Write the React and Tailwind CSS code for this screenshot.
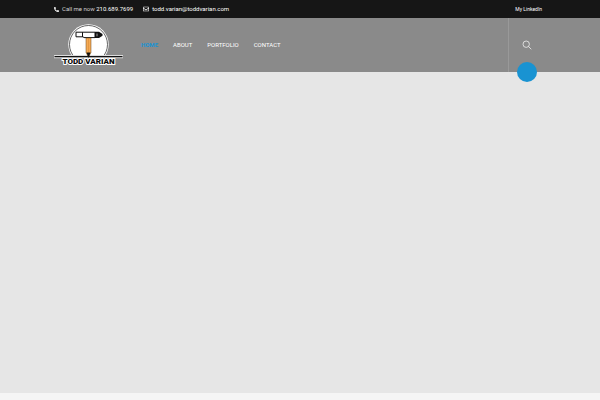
import { FaPhoneAlt, FaRegEnvelope } from 'react-icons/fa';

const links = [
  { label: 'HOME', href: '#home', active: true },
  { label: 'ABOUT', href: '#about' },
  { label: 'PORTFOLIO', href: '#portfolio' },
  { label: 'CONTACT', href: '#contact' },
];

function Logo() {
  return (
    <svg viewBox="0 0 70 46" className="w-[70px] h-[46px]" role="img" aria-label="Todd Varian">
      <circle cx="34.5" cy="20.5" r="20.2" fill="#fff" />
      <circle cx="34.5" cy="20.5" r="19" fill="none" stroke="#222" strokeWidth="0.7" />
      <path d="M8 34H61L63 46H6Z" fill="#8a8a8a" />
      <path d="M0 31H69V34.2H0Z" fill="#ddd" />
      <path d="M0.5 32H68.5V33.2H0.5Z" fill="#111" />
      {/* pen */}
      <path d="M22 8.2H41V13.6H30L29 12.8H22Z" fill="#fff" stroke="#111" strokeWidth="1" />
      <path d="M28.5 8.2V13" stroke="#111" strokeWidth="1" />
      <path d="M41 7.7H45L48.5 10V11.8L45 14.1H41Z" fill="#111" />
      <path d="M43 9.5V12.3" stroke="#fff" strokeWidth="0.6" />
      {/* pencil */}
      <path d="M32 14H37V28.5L34.5 33L32 28.5Z" fill="#f5ab55" stroke="#6b461c" strokeWidth="0.5" />
      <path d="M34.5 14V28.5" stroke="#d98a38" strokeWidth="0.6" />
      <path d="M32.5 28.5H36.5L34.5 34Z" fill="#111" />
      <text
        x="34.5"
        y="40"
        textAnchor="middle"
        fill="#080808"
        stroke="#fff"
        strokeWidth="2"
        paintOrder="stroke"
        className="font-['Roboto',sans-serif] font-black text-[8px]"
      >
        TODD VARIAN
      </text>
    </svg>
  );
}

export default function App() {
  return (
    <div className="min-h-screen flex flex-col bg-[#f5f5f5] font-['Roboto',sans-serif] text-white">
      <div className="bg-[#161616] px-[54px]">
        <div className="max-w-[492px] h-[18px] pr-1 mx-auto flex items-center justify-between text-[6px] leading-[8px]">
          <div className="flex items-center gap-[10px]">
            <a href="tel:2106897699" className="flex items-center gap-[3px]">
              <FaPhoneAlt className="size-[5px]" />
              <span className="text-[#d0d0d0]">Call me now <span className="text-white">210.689.7699</span></span>
            </a>
            <a href="mailto:todd.varian@toddvarian.com" className="flex items-center gap-[3px]">
              <FaRegEnvelope className="size-[6px]" />
              todd.varian@toddvarian.com
            </a>
          </div>
          <a href="#linkedin" className="text-[5px]">My LinkedIn</a>
        </div>
      </div>

      <header className="bg-[#8a8a8a] px-[54px]">
        <div className="max-w-[492px] h-[54px] mx-auto flex items-center">
          <a href="#home" className="pt-1"><Logo /></a>
          <nav className="flex items-center gap-[15px] ml-[17px] text-[6px] leading-[8px]">
            {links.map(({ label, href, active }) => (
              <a key={label} href={href} className={active ? 'font-bold text-[#1993d2]' : 'text-white'}>
                {label}
              </a>
            ))}
          </nav>
          <div className="relative ml-auto self-stretch w-[38px] pr-[2px] border-l border-[#999] flex items-center justify-center">
            <button type="button" aria-label="Search">
              <svg viewBox="0 0 10 10" className="size-[10px]" fill="none" stroke="#f0f0f0" strokeWidth="0.8">
                <circle cx="4.2" cy="4.2" r="3.2" />
                <path d="M6.5 6.5L9.3 9.3" />
              </svg>
            </button>
            <span className="absolute -bottom-[10px] size-5 rounded-full bg-[#1993d2]" />
          </div>
        </div>
      </header>

      <main className="grow bg-[#e6e6e6]" />
      <footer className="h-[7px] bg-[#f5f5f5]" />
    </div>
  );
}
